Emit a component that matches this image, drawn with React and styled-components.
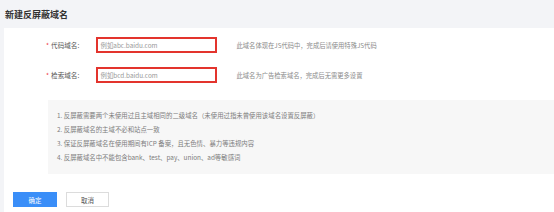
import React from "react";
import styled, { createGlobalStyle } from "styled-components";

const Global = createGlobalStyle`
  html, body { margin: 0; padding: 0; background: #f3f4f7; }
  body { font-family: "Noto Sans CJK SC", "Noto Sans", sans-serif; }
  * { box-sizing: border-box; }
`;

const Page = styled.div`
  width: 554px;
  height: 212px;
  background: #f3f4f7;
  display: flex;
  flex-direction: column;
  overflow: hidden;
`;

const Header = styled.div`
  height: 28px;
  padding-left: 5px;
  display: flex;
  align-items: center;
  font-size: 9px;
  font-weight: 700;
  color: #333;
`;

const Panel = styled.div`
  flex: 1;
  margin-left: 4px;
  background: #fff;
  padding-top: 9px;
  display: flex;
  flex-direction: column;
`;

const Row = styled.div`
  display: flex;
  align-items: center;
  height: 16px;
  margin-bottom: ${(p) => p.$mb || 0}px;
`;

const Label = styled.div`
  margin-left: 42px;
  width: 49.5px;
  font-size: 6.6px;
  color: #555;
  display: flex;
  align-items: center;
`;

const Star = styled.span`
  color: #f0343a;
  margin-right: 2px;
`;

const Input = styled.div`
  width: 121px;
  height: 16px;
  border: 2px solid #e3342d;
  display: flex;
  align-items: center;
  padding-left: 3px;
  font-size: 6.4px;
  color: #999;
`;

const Help = styled.div`
  margin-left: 20px;
  font-size: 6.3px;
  color: #8a8a8a;
`;

const InfoBox = styled.div`
  margin-left: 44px;
  background: #f7f7f7;
  padding: 9px 0 9px 9px;
  display: flex;
  flex-direction: column;
`;

const InfoLine = styled.div`
  height: 14px;
  line-height: 14px;
  font-size: 6.4px;
  color: #7d7d7d;
  white-space: nowrap;
`;

const Buttons = styled.div`
  display: flex;
  gap: 9px;
  margin-left: 9px;
  margin-top: 18px;
`;

const Button = styled.div`
  width: ${(p) => (p.$primary ? 44 : 43)}px;
  height: 15px;
  display: flex;
  align-items: center;
  justify-content: center;
  font-size: 6.5px;
  background: ${(p) => (p.$primary ? "#3a8ef8" : "#fff")};
  color: ${(p) => (p.$primary ? "#fff" : "#555")};
  border: 1px solid ${(p) => (p.$primary ? "#3a8ef8" : "#dcdcdc")};
`;

const tips = [
  "1. 反屏蔽需要两个未使用过且主域相同的二级域名（未使用过指未曾使用该域名设置反屏蔽）",
  "2. 反屏蔽域名的主域不必和站点一致",
  "3. 保证反屏蔽域名在使用期间有ICP 备案，且无色情、暴力等违规内容",
  "4. 反屏蔽域名中不能包含bank、test、pay、union、ad等敏感词",
];

export default function App() {
  return (
    <>
      <Global />
      <Page>
        <Header>新建反屏蔽域名</Header>
        <Panel>
          <Row $mb={14}>
            <Label>
              <Star>*</Star>代码域名:
            </Label>
            <Input>例如abc.baidu.com</Input>
            <Help>此域名体现在JS代码中，完成后请使用特殊JS代码</Help>
          </Row>
          <Row $mb={17}>
            <Label>
              <Star>*</Star>检索域名:
            </Label>
            <Input>例如bcd.baidu.com</Input>
            <Help>此域名为广告检索域名，完成后无需更多设置</Help>
          </Row>
          <InfoBox>
            {tips.map((t) => (
              <InfoLine key={t}>{t}</InfoLine>
            ))}
          </InfoBox>
          <Buttons>
            <Button $primary>确定</Button>
            <Button>取消</Button>
          </Buttons>
        </Panel>
      </Page>
    </>
  );
}
